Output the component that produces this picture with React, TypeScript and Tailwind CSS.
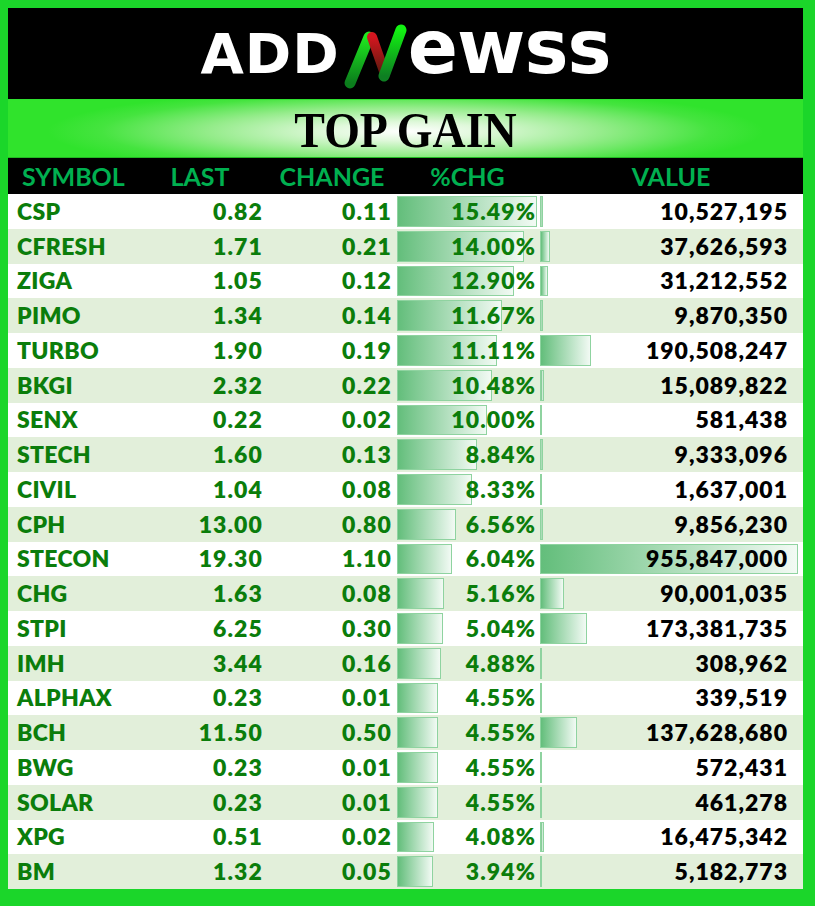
import React from "react";

type Row = [string, string, string, number, number];

const rows: Row[] = [
  ["CSP", "0.82", "0.11", 15.49, 10527195],
  ["CFRESH", "1.71", "0.21", 14.0, 37626593],
  ["ZIGA", "1.05", "0.12", 12.9, 31212552],
  ["PIMO", "1.34", "0.14", 11.67, 9870350],
  ["TURBO", "1.90", "0.19", 11.11, 190508247],
  ["BKGI", "2.32", "0.22", 10.48, 15089822],
  ["SENX", "0.22", "0.02", 10.0, 581438],
  ["STECH", "1.60", "0.13", 8.84, 9333096],
  ["CIVIL", "1.04", "0.08", 8.33, 1637001],
  ["CPH", "13.00", "0.80", 6.56, 9856230],
  ["STECON", "19.30", "1.10", 6.04, 955847000],
  ["CHG", "1.63", "0.08", 5.16, 90001035],
  ["STPI", "6.25", "0.30", 5.04, 173381735],
  ["IMH", "3.44", "0.16", 4.88, 308962],
  ["ALPHAX", "0.23", "0.01", 4.55, 339519],
  ["BCH", "11.50", "0.50", 4.55, 137628680],
  ["BWG", "0.23", "0.01", 4.55, 572431],
  ["SOLAR", "0.23", "0.01", 4.55, 461278],
  ["XPG", "0.51", "0.02", 4.08, 16475342],
  ["BM", "1.32", "0.05", 3.94, 5182773],
];

const MAX_PCT = 15.49;
const MAX_VAL = 955847000;

function Logo() {
  return (
    <div className="flex items-baseline justify-center text-white font-['DejaVu_Sans',sans-serif] font-bold leading-none">
      <span className="text-[56px] tracking-[1px]">ADD</span>
      <svg
        width="66"
        height="72"
        viewBox="0 0 66 72"
        className="mx-[1px] translate-y-[20px]"
      >
        <defs>
          <linearGradient id="gL" x1="0" y1="0" x2="0" y2="1">
            <stop offset="0" stopColor="#1fe81f" />
            <stop offset="1" stopColor="#0b7d1c" />
          </linearGradient>
          <linearGradient id="gR" x1="0" y1="0" x2="0" y2="1">
            <stop offset="0" stopColor="#d4161f" />
            <stop offset="1" stopColor="#5a1a0e" />
          </linearGradient>
          <linearGradient id="gG" x1="0" y1="0" x2="0" y2="1">
            <stop offset="0" stopColor="#12f212" />
            <stop offset="1" stopColor="#0e7f22" />
          </linearGradient>
        </defs>
        <line x1="9" y1="62" x2="28" y2="16" stroke="url(#gL)" strokeWidth="11" strokeLinecap="round" />
        <line x1="31" y1="16" x2="44" y2="53" stroke="url(#gR)" strokeWidth="10" strokeLinecap="round" />
        <line x1="43" y1="55" x2="60" y2="9" stroke="url(#gG)" strokeWidth="11" strokeLinecap="round" />
      </svg>
      <span className="text-[74px] tracking-[-1px]">ewss</span>
    </div>
  );
}

export default function App() {
  return (
    <div className="w-[815px] h-[906px] bg-[#1bd62a] pt-[8px] pl-[8px] pr-[12px]">
      <div className="w-[795px] flex flex-col">
        <div className="h-[91px] bg-black flex items-center justify-center pb-[22px]">
          <Logo />
        </div>
        <div className="h-[59px] border-t border-[#2fe02f] bg-[radial-gradient(ellipse_45%_75%_at_50%_55%,#ffffff_0%,#dff8da_22%,#95ec8b_55%,#45e43f_85%,#30e32c_100%)] flex items-center justify-center border-b border-b-[#22b822]">
          <span className="inline-block scale-x-90 font-['Liberation_Serif',serif] font-bold text-[51px] leading-none text-black mt-[3px]">
            TOP GAIN
          </span>
        </div>
        <div className="h-[36px] bg-black grid grid-cols-[124px_136px_128px_143px_264px] items-center font-['Lato',sans-serif] font-bold text-[25px] text-[#00b050] leading-none">
          <div className="pl-[14px]">SYMBOL</div>
          <div className="text-center">LAST</div>
          <div className="text-center">CHANGE</div>
          <div className="text-center">%CHG</div>
          <div className="text-center">VALUE</div>
        </div>
        <div className="flex flex-col font-['Lato',sans-serif] font-extrabold text-[23px] leading-none">
          {rows.map(([sym, last, chg, pct, val], i) => (
            <div
              key={sym + i}
              className={`h-[34.75px] grid grid-cols-[124px_136px_128px_143px_264px] items-center ${
                i % 2 === 0 ? "bg-white" : "bg-[#e2efda]"
              }`}
            >
              <div className="pl-[9px] tracking-[0.3px] text-[#0b7d0b]">{sym}</div>
              <div className="text-right pr-[5px] tracking-[1.1px] text-[#0b7d0b]">{last}</div>
              <div className="text-right pr-[4px] tracking-[1.1px] text-[#0b7d0b]">{chg}</div>
              <div className="relative h-full flex items-center justify-end pr-[3px] tracking-[1.1px] text-[#0b7d0b]">
                <div
                  className="absolute left-[1px] top-[2px] bottom-[2px] border border-[#8fd3a0] bg-[linear-gradient(to_right,#63be7b,#f2faf4)]"
                  style={{ width: `${(pct / MAX_PCT) * 140}px` }}
                />
                <span className="relative">{pct.toFixed(2)}%</span>
              </div>
              <div className="relative h-full flex items-center justify-end pr-[15px] tracking-[1px] text-black">
                <div
                  className="absolute left-[1px] top-[2px] bottom-[2px] border border-[#8fd3a0] bg-[linear-gradient(to_right,#63be7b,#f2faf4)]"
                  style={{ width: `${(val / MAX_VAL) * 258}px` }}
                />
                <span className="relative">{val.toLocaleString("en-US")}</span>
              </div>
            </div>
          ))}
        </div>
      </div>
    </div>
  );
}
